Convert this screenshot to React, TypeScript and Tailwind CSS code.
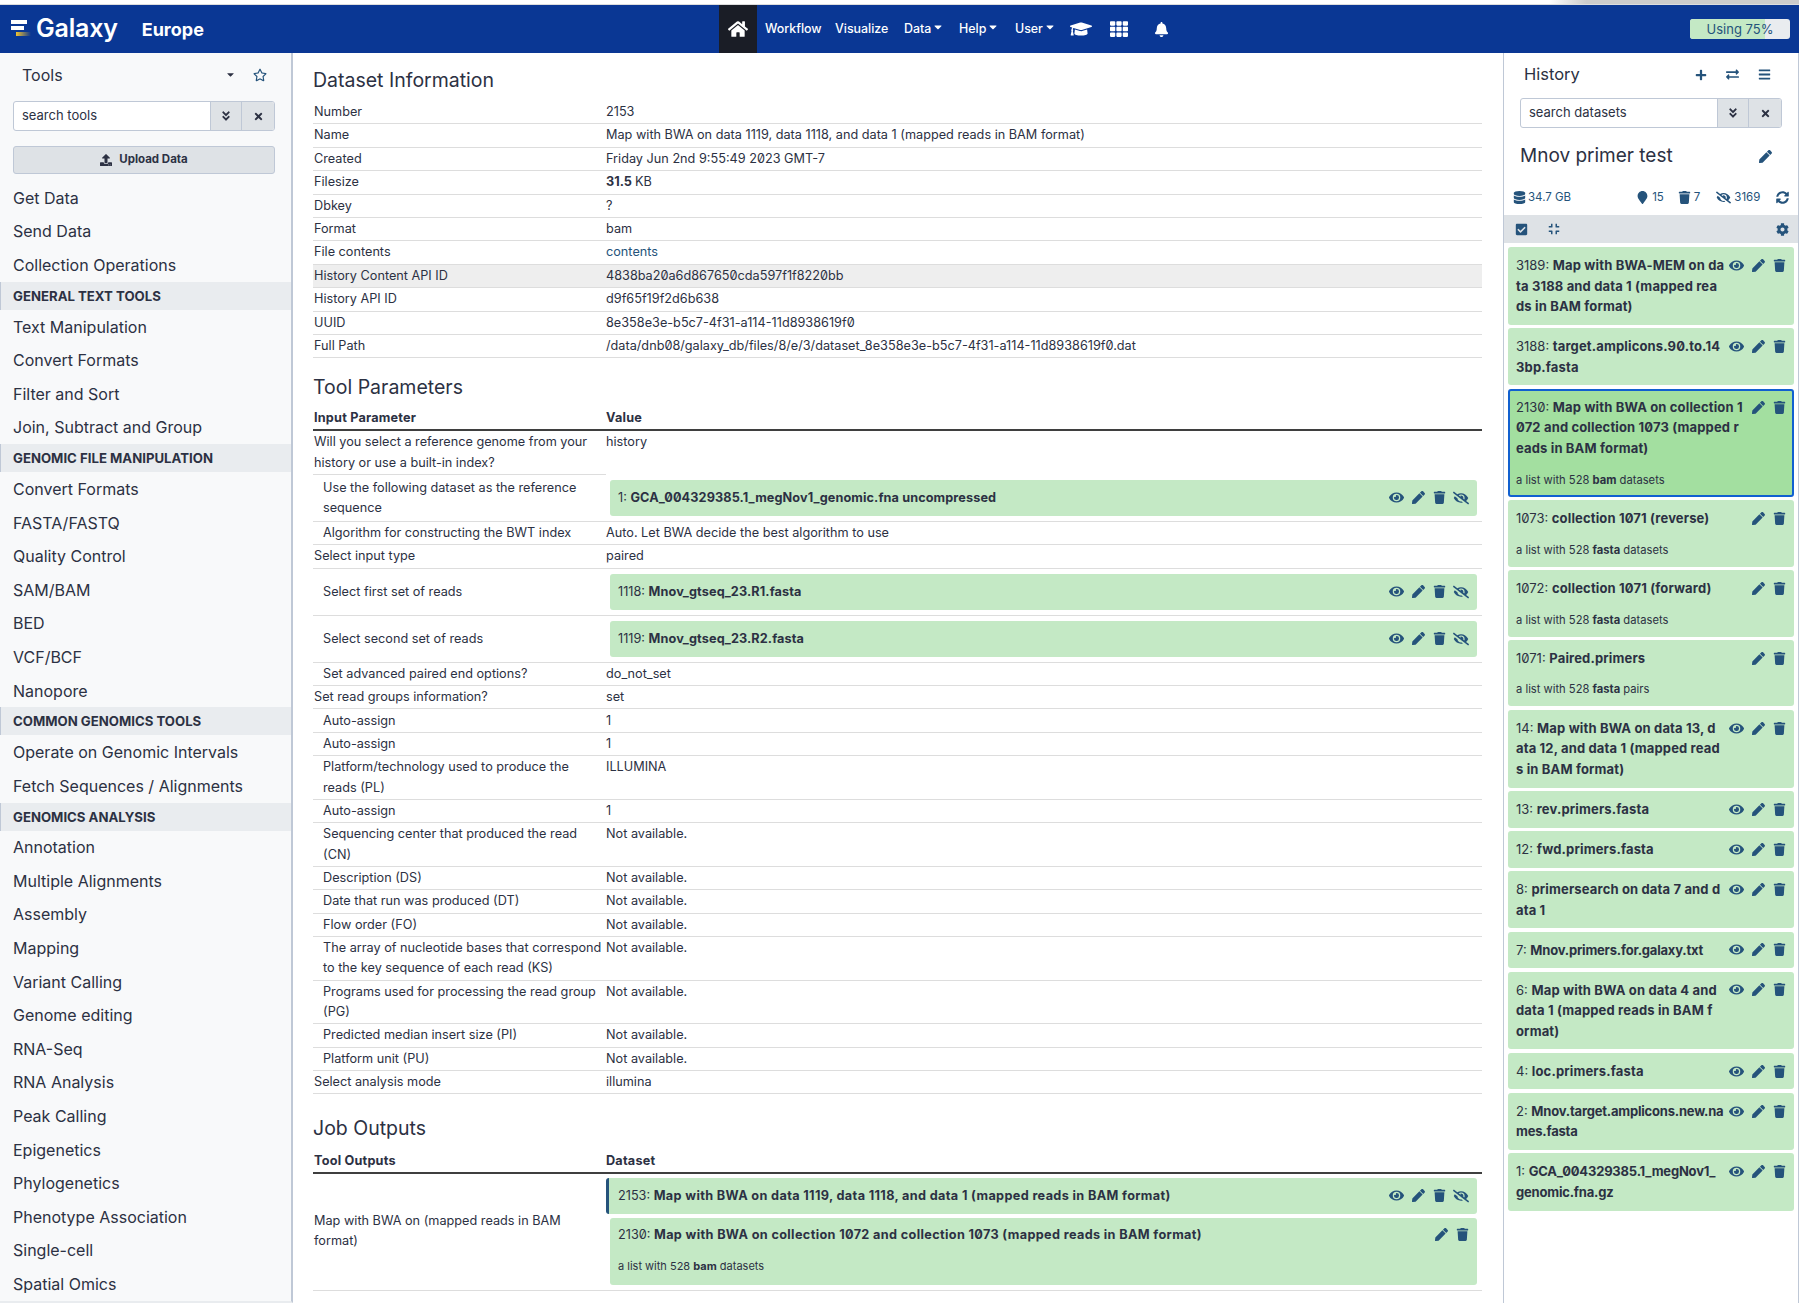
import type { ReactNode } from "react";
import {
  FaAngleDoubleDown, FaBars, FaBell, FaCaretDown, FaCheckSquare, FaCog, FaCompress,
  FaDatabase, FaExchangeAlt, FaEye, FaEyeSlash, FaGraduationCap, FaHome, FaMapMarker, FaPen,
  FaPlus, FaRegStar, FaSyncAlt, FaTh, FaTimes, FaTrash, FaUpload,
} from "react-icons/fa";

const sidebar: [string, boolean][] = [
  ["Get Data", false], ["Send Data", false], ["Collection Operations", false],
  ["GENERAL TEXT TOOLS", true],
  ["Text Manipulation", false], ["Convert Formats", false], ["Filter and Sort", false], ["Join, Subtract and Group", false],
  ["GENOMIC FILE MANIPULATION", true],
  ["Convert Formats", false], ["FASTA/FASTQ", false], ["Quality Control", false], ["SAM/BAM", false], ["BED", false], ["VCF/BCF", false], ["Nanopore", false],
  ["COMMON GENOMICS TOOLS", true],
  ["Operate on Genomic Intervals", false], ["Fetch Sequences / Alignments", false],
  ["GENOMICS ANALYSIS", true],
  ["Annotation", false], ["Multiple Alignments", false], ["Assembly", false], ["Mapping", false], ["Variant Calling", false], ["Genome editing", false],
  ["RNA-Seq", false], ["RNA Analysis", false], ["Peak Calling", false], ["Epigenetics", false], ["Phylogenetics", false], ["Phenotype Association", false], ["Single-cell", false], ["Spatial Omics", false],
];

const info: [string, ReactNode][] = [
  ["Number", "2153"],
  ["Name", "Map with BWA on data 1119, data 1118, and data 1 (mapped reads in BAM format)"],
  ["Created", "Friday Jun 2nd 9:55:49 2023 GMT-7"],
  ["Filesize", <b className="font-bold" key="s">31.5 <span className="font-normal">KB</span></b>],
  ["Dbkey", "?"],
  ["Format", "bam"],
  ["File contents", <span className="text-[#25537b]" key="c">contents</span>],
  ["History Content API ID", "4838ba20a6d867650cda597f1f8220bb"],
  ["History API ID", "d9f65f19f2d6b638"],
  ["UUID", "8e358e3e-b5c7-4f31-a114-11d8938619f0"],
  ["Full Path", "/data/dnb08/galaxy_db/files/8/e/3/dataset_8e358e3e-b5c7-4f31-a114-11d8938619f0.dat"],
];

type HistoryItem = { id: string; lines: string[]; sub?: [string, string]; eye?: boolean; active?: boolean; tight?: boolean };

const history: HistoryItem[] = [
  { id: "3189", lines: ["Map with BWA-MEM on da", "ta 3188 and data 1 (mapped rea", "ds in BAM format)"], eye: true },
  { id: "3188", lines: ["target.amplicons.90.to.14", "3bp.fasta"], eye: true },
  { id: "2130", lines: ["Map with BWA on collection 1", "072 and collection 1073 (mapped r", "eads in BAM format)"], sub: ["bam", "datasets"], active: true },
  { id: "1073", lines: ["collection 1071 (reverse)"], sub: ["fasta", "datasets"] },
  { id: "1072", lines: ["collection 1071 (forward)"], sub: ["fasta", "datasets"] },
  { id: "1071", lines: ["Paired.primers"], sub: ["fasta", "pairs"] },
  { id: "14", lines: ["Map with BWA on data 13, d", "ata 12, and data 1 (mapped read", "s in BAM format)"], eye: true },
  { id: "13", lines: ["rev.primers.fasta"], eye: true },
  { id: "12", lines: ["fwd.primers.fasta"], eye: true },
  { id: "8", lines: ["primersearch on data 7 and d", "ata 1"], eye: true },
  { id: "7", lines: ["Mnov.primers.for.galaxy.txt"], eye: true, tight: true },
  { id: "6", lines: ["Map with BWA on data 4 and", "data 1 (mapped reads in BAM f", "ormat)"], eye: true },
  { id: "4", lines: ["loc.primers.fasta"], eye: true },
  { id: "2", lines: ["Mnov.target.amplicons.new.na", "mes.fasta"], eye: true, tight: true },
  { id: "1", lines: ["GCA_004329385.1_megNov1_", "genomic.fna.gz"], eye: true, tight: true },
];

function Logo() {
  return (
    <svg width="20" height="18" viewBox="0 0 20 18" className="ml-[11px] mr-[5px]">
      <defs>
        <linearGradient id="logoFade" x1="0" x2="1" y1="0" y2="0">
          <stop offset="0" stopColor="#f2c230" />
          <stop offset="1" stopColor="#0a3794" />
        </linearGradient>
      </defs>
      <rect x="0" y="0" width="16" height="4" fill="#fff" />
      <rect x="0" y="6" width="13" height="4" fill="#fff" />
      <rect x="5" y="12" width="15" height="4" fill="url(#logoFade)" />
    </svg>
  );
}

function Caret() {
  return <FaCaretDown className="ml-[1px] -translate-y-[2px] text-[12px]" />;
}

function Header() {
  return (
    <div className="flex h-[48px] shrink-0 items-center bg-[#0a3794] text-white">
      <div className="flex w-[719px] items-center">
        <Logo />
        <span className="text-[25px] font-semibold tracking-[-0.2px]">Galaxy</span>
        <span className="ml-[24px] text-[18px] font-bold">Europe</span>
      </div>
      <div className="flex h-full w-[38px] items-center justify-center bg-[#1a1d26]">
        <FaHome className="text-[20px]" />
      </div>
      <div className="ml-[8px] flex items-center text-[12.4px] font-medium">
        <span className="w-[70px]">Workflow</span>
        <span className="w-[69px]">Visualize</span>
        <span className="flex w-[55px] items-center">Data<Caret /></span>
        <span className="flex w-[56px] items-center">Help<Caret /></span>
        <span className="flex w-[55px] items-center">User<Caret /></span>
        <FaGraduationCap className="text-[22px]" />
        <FaTh className="ml-[18px] text-[18px]" />
        <FaBell className="ml-[26px] text-[15px]" />
      </div>
      <div className="relative ml-auto mr-[9px] h-[20px] w-[100px] overflow-hidden rounded-[3px] bg-[#e9ecef]">
        <div className="h-full w-[75px] bg-[#c4e9c5]" />
        <div className="absolute inset-0 text-center text-[13px] leading-[20px] text-[#25537b]">Using 75%</div>
      </div>
    </div>
  );
}

function SearchBox({ placeholder }: { placeholder: string }) {
  return (
    <div className="flex h-[30px] overflow-hidden rounded-[3px] border border-[#bfc8d6] bg-white text-[13px] text-[#2c3143]">
      <div className="flex flex-1 items-center pl-[8px]">{placeholder}</div>
      <div className="flex w-[32px] items-center justify-center border-x border-[#bfc8d6] bg-[#dee2e6]">
        <FaAngleDoubleDown className="text-[12px]" />
      </div>
      <div className="flex w-[32px] items-center justify-center bg-[#dee2e6]">
        <FaTimes className="text-[11px]" />
      </div>
    </div>
  );
}

function Sidebar() {
  return (
    <div className="h-full w-[293px] shrink-0 overflow-hidden border-b-2 border-r-2 border-[#bfc8d6] border-b-[#e9ecef] bg-[#f8f9fa] text-[#2c3143]">
      <div className="flex h-[48px] items-center pb-[5px] pl-[22px] pr-[24px]">
        <span className="flex-1 text-[16px]">Tools</span>
        <FaCaretDown className="mr-[17px] text-[11px]" />
        <FaRegStar className="text-[14px] text-[#25537b]" />
      </div>
      <div className="mx-[13px] w-[262px]">
        <SearchBox placeholder="search tools" />
      </div>
      <div className="mx-[13px] mb-[7px] mt-[15px] flex h-[28px] w-[262px] items-center justify-center gap-[7px] rounded-[3px] border border-[#bfc8d6] bg-[#dee2e6] text-[11.5px] font-bold">
        <FaUpload className="text-[12px]" />
        Upload Data
      </div>
      {sidebar.map(([name, band], i) =>
        band ? (
          <div key={i} className="flex h-[28px] items-center border-l border-[#bfc8d6] bg-[#e9ecef] pl-[12px] pt-[2px] text-[13.2px] font-bold">
            {name}
          </div>
        ) : (
          <div key={i} className="flex h-[33.6px] items-center pl-[13px] text-[16px]">
            {name}
          </div>
        ),
      )}
    </div>
  );
}

function Actions({ eye, slash }: { eye?: boolean; slash?: boolean }) {
  return (
    <div className="flex items-center text-[#25537b]">
      {eye && <FaEye className="mr-[8px] text-[15px]" />}
      <FaPen className="text-[13px]" />
      <FaTrash className="ml-[8px] text-[13px]" />
      {slash && <FaEyeSlash className="ml-[7px] text-[16px]" />}
    </div>
  );
}

function DatasetCard({ id, name, sub, slash, accent }: { id: string; name: string; sub?: boolean; slash?: boolean; accent?: boolean }) {
  return (
    <div className={`rounded-[3px] bg-[#c4e9c5] pr-[8px] ${accent ? "border-l-[3px] border-[#25537b] pl-[9px]" : "ml-[4px] pl-[8px]"} ${sub ? "h-[67px] pt-[7px]" : "flex h-[36px] items-center"}`}>
      <div className="flex w-full items-center justify-between">
        <div className="leading-[20px]">{id}: <b className={`font-bold ${accent || sub ? "tracking-[0.35px]" : "tracking-[0.1px]"}`}>{name}</b></div>
        <Actions eye={!sub} slash={slash} />
      </div>
      {sub && <div className="mt-[13px] text-[11px]">a list with 528 <b>bam</b> datasets</div>}
    </div>
  );
}

function Row({ label, indent, value, open, hover }: { label: string; indent?: boolean; value?: ReactNode; open?: boolean; hover?: boolean }) {
  return (
    <div className={`flex ${hover ? "bg-[#eeeeee]" : ""}`}>
      <div className={`w-[293px] shrink-0 border-b border-[#dddddd] py-[1.1px] pr-[3px] leading-[20.2px] ${indent ? "pl-[10px]" : "pl-[1px]"}`}>{label}</div>
      <div className={`flex-1 py-[1.1px] leading-[20.2px] ${open ? "" : "border-b border-[#dddddd]"}`}>{value}</div>
    </div>
  );
}

function CardRow({ label, height, id, name }: { label: string; height: string; id: string; name: string }) {
  return (
    <div className="flex">
      <div className={`flex w-[293px] shrink-0 items-center border-b border-[#dddddd] pl-[10px] pr-[2px] leading-[20.2px] ${height}`}>{label}</div>
      <div className={`flex flex-1 items-center border-b border-[#dddddd] pr-[5px] ${height}`}>
        <div className="flex-1"><DatasetCard id={id} name={name} slash /></div>
      </div>
    </div>
  );
}

function TableHead({ left, right }: { left: string; right: string }) {
  return (
    <div className="flex border-b-2 border-[#3f3f3f] pb-[1px] font-bold leading-[20px] tracking-[0.2px]">
      <div className="w-[293px] pl-[1px]">{left}</div>
      <div>{right}</div>
    </div>
  );
}

function Main() {
  const missing = "Not available.";
  return (
    <div className="h-full min-w-0 flex-1 overflow-hidden bg-white pl-[20px] pr-[21px] pt-[14px] text-[12.7px] text-[#2c3143]">
      <h2 className="mb-[8px] text-[19.5px] leading-[26px]">Dataset Information</h2>
      {info.map(([k, v], i) => (
        <Row key={i} label={k} value={v} hover={k === "History Content API ID"} />
      ))}

      <h2 className="mb-[8px] mt-[16px] text-[19.5px] leading-[26px]">Tool Parameters</h2>
      <TableHead left="Input Parameter" right="Value" />
      <Row label="Will you select a reference genome from your history or use a built-in index?" value="history" open />
      <CardRow label="Use the following dataset as the reference sequence" height="h-[47px]" id="1" name="GCA_004329385.1_megNov1_genomic.fna uncompressed" />
      <Row indent label="Algorithm for constructing the BWT index" value="Auto. Let BWA decide the best algorithm to use" />
      <Row label="Select input type" value="paired" />
      <CardRow label="Select first set of reads" height="h-[47px]" id="1118" name="Mnov_gtseq_23.R1.fasta" />
      <CardRow label="Select second set of reads" height="h-[47px]" id="1119" name="Mnov_gtseq_23.R2.fasta" />
      <Row indent label="Set advanced paired end options?" value="do_not_set" />
      <Row label="Set read groups information?" value="set" />
      <Row indent label="Auto-assign" value="1" />
      <Row indent label="Auto-assign" value="1" />
      <Row indent label="Platform/technology used to produce the reads (PL)" value="ILLUMINA" />
      <Row indent label="Auto-assign" value="1" />
      <Row indent label="Sequencing center that produced the read (CN)" value={missing} />
      <Row indent label="Description (DS)" value={missing} />
      <Row indent label="Date that run was produced (DT)" value={missing} />
      <Row indent label="Flow order (FO)" value={missing} />
      <Row indent label="The array of nucleotide bases that correspond to the key sequence of each read (KS)" value={missing} />
      <Row indent label="Programs used for processing the read group (PG)" value={missing} />
      <Row indent label="Predicted median insert size (PI)" value={missing} />
      <Row indent label="Platform unit (PU)" value={missing} />
      <Row label="Select analysis mode" value="illumina" />

      <h2 className="mb-[10px] mt-[20.5px] text-[19.5px] leading-[26px]">Job Outputs</h2>
      <TableHead left="Tool Outputs" right="Dataset" />
      <div className="flex border-b border-[#dddddd] pb-[5px] pt-[4px]">
        <div className="flex w-[293px] shrink-0 items-center pl-[1px] pr-[2px] leading-[20.2px]">Map with BWA on (mapped reads in BAM format)</div>
        <div className="flex flex-1 flex-col gap-[4px] pr-[5px]">
          <DatasetCard accent slash id="2153" name="Map with BWA on data 1119, data 1118, and data 1 (mapped reads in BAM format)" />
          <DatasetCard sub id="2130" name="Map with BWA on collection 1072 and collection 1073 (mapped reads in BAM format)" />
        </div>
      </div>
    </div>
  );
}

function HistoryCard({ item }: { item: HistoryItem }) {
  return (
    <div className={`rounded-[3px] text-[13px] leading-[20.6px] text-[#2c3143] ${item.active ? "border-2 border-[#1060d0] bg-[#a3dfa0] p-[6px]" : "bg-[#c4e9c5] p-[8px]"}`}>
      <div className="flex justify-between">
        <div className="whitespace-nowrap">
          {item.lines.map((line, i) => (
            <div key={i}>
              {i === 0 && `${item.id}: `}
              <b className={`font-bold ${item.tight ? "tracking-[-0.2px]" : "tracking-[0.15px]"}`}>{line}</b>
            </div>
          ))}
        </div>
        <div className="flex h-[20.6px] items-center"><Actions eye={item.eye} /></div>
      </div>
      {item.sub && (
        <div className="mt-[12px] h-[18px] text-[11.2px] leading-[18px]">
          a list with 528 <b>{item.sub[0]}</b> {item.sub[1]}
        </div>
      )}
    </div>
  );
}

function HistoryPanel() {
  return (
    <div className="h-full w-[296px] shrink-0 overflow-hidden border-x border-[#bfc8d6] bg-white text-[#2c3143]">
      <div className="flex h-[43px] items-center pl-[20px] pr-[27px]">
        <span className="flex-1 text-[16.5px]">History</span>
        <div className="flex items-center gap-[19px] text-[#25537b]">
          <FaPlus className="text-[12px]" />
          <FaExchangeAlt className="text-[13px]" />
          <FaBars className="text-[13px]" />
        </div>
      </div>
      <div className="ml-[16px] mt-[2px] w-[262px]">
        <SearchBox placeholder="search datasets" />
      </div>
      <div className="flex h-[53px] items-center pl-[16px] pr-[26px] pt-[3px]">
        <span className="flex-1 text-[19px]">Mnov primer test</span>
        <FaPen className="text-[13px] text-[#25537b]" />
      </div>
      <div className="flex h-[34px] items-center px-[9px] pb-[1px] text-[11.5px] text-[#25537b]">
        <FaDatabase className="text-[13px]" />
        <span className="ml-[2px]">34.7 GB</span>
        <FaMapMarker className="ml-[65px] text-[13px]" />
        <span className="ml-[3px]">15</span>
        <FaTrash className="ml-[14px] text-[13px]" />
        <span className="ml-[3px]">7</span>
        <FaEyeSlash className="ml-[16px] text-[15px]" />
        <span className="ml-[3px]">3169</span>
        <FaSyncAlt className="ml-auto text-[13px]" />
      </div>
      <div className="flex h-[28px] items-center bg-[#dee2e6] pl-[11px] pr-[9px] text-[#25537b]">
        <FaCheckSquare className="text-[13px]" />
        <FaCompress className="ml-[20px] text-[12px]" />
        <FaCog className="ml-auto text-[13px]" />
      </div>
      <div className="flex flex-col gap-[3.4px] px-[4px] pt-[4px]">
        {history.map((item) => (
          <HistoryCard key={item.id} item={item} />
        ))}
      </div>
    </div>
  );
}

export default function App() {
  return (
    <div className="flex h-[1303px] flex-col overflow-hidden bg-white font-['Inter',sans-serif] slashed-zero">
      <div className="flex h-[5px] shrink-0 border-b border-[#dddddd] bg-white">
        <div className="flex-1" />
        <div className="w-[250px] bg-linear-to-r from-white to-[#cccccc] to-[15%]" />
      </div>
      <Header />
      <div className="flex min-h-0 flex-1">
        <Sidebar />
        <Main />
        <HistoryPanel />
      </div>
    </div>
  );
}
